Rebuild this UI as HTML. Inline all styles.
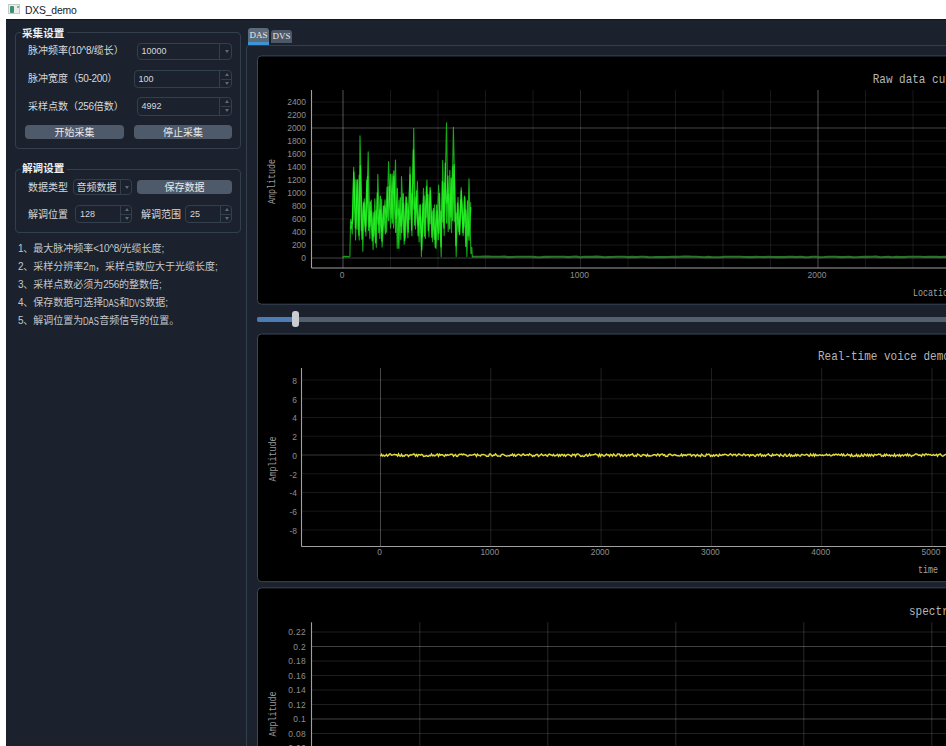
<!DOCTYPE html><html lang="zh"><head><meta charset="utf-8"><title>DXS_demo</title><style>
*{box-sizing:border-box;margin:0;padding:0}
html,body{width:946px;height:746px;overflow:hidden;background:#fff}
body{position:relative;font-family:"Liberation Sans","Noto Sans CJK SC",sans-serif;font-size:10px;color:#d6d9dc}
.abs{position:absolute}
#win{position:absolute;left:6px;top:19px;width:940px;height:727px;background:#1b222d;border-top:1px solid #10161d}
#title{position:absolute;left:25px;top:3px;font-size:10.4px;line-height:15px;color:#1a1a1a;font-family:"Liberation Sans",sans-serif;letter-spacing:-0.2px}
.gb{position:absolute;border:1px solid #343f4d;border-radius:4px}
.gbt{position:absolute;font-weight:bold;font-size:10.6px;line-height:12px;background:#1b222d;padding:0 3px 0 1px;white-space:nowrap;color:#eef0f2}
.lb{position:absolute;font-size:10px;line-height:12px;white-space:nowrap;color:#d6d9dc}
.a{display:inline-block;font-size:10.5px;line-height:12px;transform:scaleX(.74);transform-origin:0 50%;vertical-align:top}
.d{letter-spacing:-0.3px}
.inp{position:absolute;border:1px solid #343f4d;border-radius:4px;background:#1b222d;font-size:9px;line-height:14px;color:#d6d9dc;white-space:nowrap}
.inp span.v{position:absolute;left:4px;top:50%;transform:translateY(-50%)}
.inp .sep{position:absolute;top:0;bottom:0;right:10.5px;width:1px;background:#343f4d}
.inp .mid{position:absolute;right:0;width:10px;top:50%;height:1px;background:#343f4d}
.btn{position:absolute;background:#4e5a69;border-radius:4px;text-align:center;font-size:10px;line-height:14px;color:#e8eaec;white-space:nowrap}
.arr{position:absolute;width:0;height:0;border-left:2.5px solid transparent;border-right:2.5px solid transparent}
.up{border-bottom:3px solid #5f6974}
.dn{border-top:3px solid #5f6974}
.tab{position:absolute;background:#4e5a69;color:#e8eaec;font-size:9px;text-align:center;border-radius:3px 3px 0 0;font-family:"Liberation Serif",serif}
.plot{position:absolute;background:#000;border:1px solid #3b4858;border-radius:4px;overflow:hidden}
svg text{font-family:"Liberation Sans",sans-serif}
svg text.m{font-family:"Liberation Mono",monospace}
</style></head><body>
<div class="abs" style="left:0;top:0;width:946px;height:19px;background:#fff"></div>
<div class="abs" style="left:8px;top:3.5px;width:12px;height:10px;background:#eceeed;border:1px solid #c4cac8"></div>
<div class="abs" style="left:9.5px;top:6px;width:4px;height:6.5px;background:#3f8f78;border-radius:1px"></div>
<div class="abs" style="left:17px;top:6px;width:2px;height:2px;background:#7fb5a0"></div>
<div id="title">DXS_demo</div>
<div id="win">
<div class="gb" style="left:9px;top:12px;width:226px;height:117px"></div>
<div class="gbt" style="left:15px;top:6.5px">采集设置</div>
<div class="lb" style="left:22px;top:25px;">脉冲频率<span class="d">(10^8/</span>缆长）</div>
<div class="inp" style="left:130.5px;top:22.5px;width:95.0px;height:17.0px;font-size:9px"><span class="v" style="left:4px;margin-top:0px">10000</span><div class="sep"></div><div class="arr dn" style="right:2px;top:6.0px"></div></div>
<div class="lb" style="left:22px;top:53px;">脉冲宽度（<span class="d">50-200</span>）</div>
<div class="inp" style="left:127.5px;top:49.5px;width:98.0px;height:18.0px"><span class="v">100</span><div class="sep"></div><div class="mid"></div><div class="arr up" style="right:2px;top:2.0px"></div><div class="arr dn" style="right:2px;top:11.0px"></div></div>
<div class="lb" style="left:22px;top:81px;">采样点数（<span class="d">256</span>倍数）</div>
<div class="inp" style="left:130.5px;top:77px;width:95.0px;height:18.5px"><span class="v">4992</span><div class="sep"></div><div class="mid"></div><div class="arr up" style="right:2px;top:2.125px"></div><div class="arr dn" style="right:2px;top:11.375px"></div></div>
<div class="btn" style="left:19px;top:105px;width:99px;height:14px;line-height:15.6px">开始采集</div>
<div class="btn" style="left:128px;top:105px;width:98px;height:14px;line-height:15.6px">停止采集</div>
<div class="gb" style="left:9px;top:149px;width:226px;height:64px"></div>
<div class="gbt" style="left:15px;top:142px">解调设置</div>
<div class="lb" style="left:22px;top:161.5px;">数据类型</div>
<div class="inp" style="left:67px;top:159px;width:59px;height:16px;font-size:10px"><span class="v" style="left:2.5px;margin-top:0.8px">音频数据</span><div class="sep"></div><div class="arr dn" style="right:2px;top:5.5px"></div></div>
<div class="btn" style="left:131px;top:160px;width:95px;height:14px;line-height:15.6px">保存数据</div>
<div class="lb" style="left:22px;top:188.5px;">解调位置</div>
<div class="inp" style="left:69px;top:185px;width:57px;height:18px"><span class="v">128</span><div class="sep"></div><div class="mid"></div><div class="arr up" style="right:2px;top:2.0px"></div><div class="arr dn" style="right:2px;top:11.0px"></div></div>
<div class="lb" style="left:135px;top:188.5px;">解调范围</div>
<div class="inp" style="left:179px;top:185px;width:47px;height:18px"><span class="v">25</span><div class="sep"></div><div class="mid"></div><div class="arr up" style="right:2px;top:2.0px"></div><div class="arr dn" style="right:2px;top:11.0px"></div></div>
<div class="lb" style="left:12px;top:223px;color:#c3c7cb"><span class="d">1</span>、最大脉冲频率<span class="d">&lt;10^8/</span>光缆长度;</div>
<div class="lb" style="left:12px;top:241px;color:#c3c7cb"><span class="d">2</span>、采样分辨率<span class="d">2</span><span class="a" style="margin-right:-2.3px">m</span>，采样点数应大于光缆长度;</div>
<div class="lb" style="left:12px;top:259px;color:#c3c7cb"><span class="d">3</span>、采样点数必须为<span class="d">256</span>的整数倍;</div>
<div class="lb" style="left:12px;top:277px;color:#c3c7cb"><span class="d">4</span>、保存数据可选择<span class="a" style="margin-right:-5.6px">DAS</span>和<span class="a" style="margin-right:-5.6px">DVS</span>数据;</div>
<div class="lb" style="left:12px;top:295px;color:#c3c7cb"><span class="d">5</span>、解调位置为<span class="a" style="margin-right:-5.6px">DAS</span>音频信号的位置。</div>
<div class="tab" style="left:242px;top:8px;width:21px;height:17px;line-height:14.5px;border-bottom:3.5px solid #3c93d8;background:#5c6a7a">DAS</div>
<div class="tab" style="left:265px;top:9.600000000000001px;width:21px;height:13.2px;line-height:13.5px;background:#4c5767">DVS</div>
<div class="abs" style="left:240px;top:25px;width:720px;height:720px;border:1px solid #343f4d;border-radius:3px"></div>
<div class="abs" style="left:251px;top:296.5px;width:700px;height:5px;background:#535f6b;border-radius:2px"></div>
<div class="abs" style="left:251px;top:296.5px;width:38px;height:5px;background:#4d7bb3;border-radius:2px"></div>
<div class="abs" style="left:286px;top:291px;width:7px;height:16px;background:#c9ccd0;border-radius:3px"></div>
</div>
<svg width="946" height="746" viewBox="0 0 946 746" style="position:absolute;left:0;top:0"><rect x="257.5" y="55.9" width="702" height="248.29999999999998" rx="4" fill="#000" stroke="#3b4858" stroke-width="1"/><line x1="311.5" x2="960" y1="258" y2="258" stroke="#fff" stroke-opacity="0.27" stroke-width="1"/><line x1="311.5" x2="960" y1="245" y2="245" stroke="#fff" stroke-opacity="0.085" stroke-width="1"/><line x1="311.5" x2="960" y1="232" y2="232" stroke="#fff" stroke-opacity="0.085" stroke-width="1"/><line x1="311.5" x2="960" y1="219" y2="219" stroke="#fff" stroke-opacity="0.085" stroke-width="1"/><line x1="311.5" x2="960" y1="206" y2="206" stroke="#fff" stroke-opacity="0.085" stroke-width="1"/><line x1="311.5" x2="960" y1="193" y2="193" stroke="#fff" stroke-opacity="0.12" stroke-width="1"/><line x1="311.5" x2="960" y1="180" y2="180" stroke="#fff" stroke-opacity="0.085" stroke-width="1"/><line x1="311.5" x2="960" y1="167" y2="167" stroke="#fff" stroke-opacity="0.085" stroke-width="1"/><line x1="311.5" x2="960" y1="154" y2="154" stroke="#fff" stroke-opacity="0.085" stroke-width="1"/><line x1="311.5" x2="960" y1="141" y2="141" stroke="#fff" stroke-opacity="0.085" stroke-width="1"/><line x1="311.5" x2="960" y1="128" y2="128" stroke="#fff" stroke-opacity="0.27" stroke-width="1"/><line x1="311.5" x2="960" y1="115" y2="115" stroke="#fff" stroke-opacity="0.085" stroke-width="1"/><line x1="311.5" x2="960" y1="102" y2="102" stroke="#fff" stroke-opacity="0.085" stroke-width="1"/><line x1="343.0" x2="343.0" y1="90" y2="268" stroke="#fff" stroke-opacity="0.32" stroke-width="1"/><line x1="390.5" x2="390.5" y1="90" y2="268" stroke="#fff" stroke-opacity="0.09" stroke-width="1"/><line x1="438.0" x2="438.0" y1="90" y2="268" stroke="#fff" stroke-opacity="0.09" stroke-width="1"/><line x1="485.5" x2="485.5" y1="90" y2="268" stroke="#fff" stroke-opacity="0.09" stroke-width="1"/><line x1="533.0" x2="533.0" y1="90" y2="268" stroke="#fff" stroke-opacity="0.09" stroke-width="1"/><line x1="580.5" x2="580.5" y1="90" y2="268" stroke="#fff" stroke-opacity="0.14" stroke-width="1"/><line x1="628.0" x2="628.0" y1="90" y2="268" stroke="#fff" stroke-opacity="0.09" stroke-width="1"/><line x1="675.5" x2="675.5" y1="90" y2="268" stroke="#fff" stroke-opacity="0.09" stroke-width="1"/><line x1="723.0" x2="723.0" y1="90" y2="268" stroke="#fff" stroke-opacity="0.09" stroke-width="1"/><line x1="770.5" x2="770.5" y1="90" y2="268" stroke="#fff" stroke-opacity="0.09" stroke-width="1"/><line x1="818.0" x2="818.0" y1="90" y2="268" stroke="#fff" stroke-opacity="0.32" stroke-width="1"/><line x1="865.5" x2="865.5" y1="90" y2="268" stroke="#fff" stroke-opacity="0.09" stroke-width="1"/><line x1="913.0" x2="913.0" y1="90" y2="268" stroke="#fff" stroke-opacity="0.09" stroke-width="1"/><line x1="960.5" x2="960.5" y1="90" y2="268" stroke="#fff" stroke-opacity="0.09" stroke-width="1"/><line x1="311.5" x2="311.5" y1="90" y2="268" stroke="#a0a0a0" stroke-width="1.1"/><line x1="311.5" x2="960" y1="268" y2="268" stroke="#a0a0a0" stroke-width="1.1"/><text font-size="9.6" fill="#8e8e8e" text-anchor="end" letter-spacing="0" transform="translate(306.0 261.4) scale(0.88 1)">0</text><text font-size="9.6" fill="#8e8e8e" text-anchor="end" letter-spacing="0" transform="translate(306.0 248.4) scale(0.88 1)">200</text><text font-size="9.6" fill="#8e8e8e" text-anchor="end" letter-spacing="0" transform="translate(306.0 235.4) scale(0.88 1)">400</text><text font-size="9.6" fill="#8e8e8e" text-anchor="end" letter-spacing="0" transform="translate(306.0 222.4) scale(0.88 1)">600</text><text font-size="9.6" fill="#8e8e8e" text-anchor="end" letter-spacing="0" transform="translate(306.0 209.4) scale(0.88 1)">800</text><text font-size="9.6" fill="#8e8e8e" text-anchor="end" letter-spacing="0" transform="translate(306.0 196.4) scale(0.88 1)">1000</text><text font-size="9.6" fill="#8e8e8e" text-anchor="end" letter-spacing="0" transform="translate(306.0 183.4) scale(0.88 1)">1200</text><text font-size="9.6" fill="#8e8e8e" text-anchor="end" letter-spacing="0" transform="translate(306.0 170.4) scale(0.88 1)">1400</text><text font-size="9.6" fill="#8e8e8e" text-anchor="end" letter-spacing="0" transform="translate(306.0 157.4) scale(0.88 1)">1600</text><text font-size="9.6" fill="#8e8e8e" text-anchor="end" letter-spacing="0" transform="translate(306.0 144.4) scale(0.88 1)">1800</text><text font-size="9.6" fill="#8e8e8e" text-anchor="end" letter-spacing="0" transform="translate(306.0 131.4) scale(0.88 1)">2000</text><text font-size="9.6" fill="#8e8e8e" text-anchor="end" letter-spacing="0" transform="translate(306.0 118.4) scale(0.88 1)">2200</text><text font-size="9.6" fill="#8e8e8e" text-anchor="end" letter-spacing="0" transform="translate(306.0 105.4) scale(0.88 1)">2400</text><text font-size="9.6" fill="#8e8e8e" text-anchor="middle" letter-spacing="0" transform="translate(342.0 278.4) scale(0.88 1)">0</text><text font-size="9.6" fill="#8e8e8e" text-anchor="middle" letter-spacing="0" transform="translate(579.5 278.4) scale(0.88 1)">1000</text><text font-size="9.6" fill="#8e8e8e" text-anchor="middle" letter-spacing="0" transform="translate(817.0 278.4) scale(0.88 1)">2000</text><text class="m" font-size="10" fill="#9a9a9a" text-anchor="middle" transform="translate(275 181.5) rotate(-90) scale(0.833 1)">Amplitude</text><text class="m" font-size="13" fill="#b6b6b6" transform="translate(872.7 83.2) scale(0.846 1)">Raw data curve</text><text class="m" font-size="10" fill="#a4a4a4" transform="translate(913 295.8) scale(0.833 1)">Location</text><polyline points="472.3,256.7 476.3,256.7 480.3,256.8 484.3,256.6 488.3,256.6 492.3,256.7 496.3,256.7 500.3,256.8 504.3,256.6 508.3,257.1 512.3,257.0 516.3,256.7 520.3,256.8 524.3,256.8 528.3,256.8 532.3,256.7 536.3,257.1 540.3,257.2 544.3,256.9 548.3,256.9 552.3,256.7 556.3,256.7 560.3,256.8 564.3,256.8 568.3,257.1 572.3,256.7 576.3,256.6 580.3,257.2 584.3,256.9 588.3,256.7 592.3,256.9 596.3,256.6 600.3,256.9 604.3,257.2 608.3,257.1 612.3,257.0 616.3,256.8 620.3,256.8 624.3,256.7 628.3,257.1 632.3,256.9 636.3,257.1 640.3,256.8 644.3,256.7 648.3,257.1 652.3,257.2 656.3,257.1 660.3,257.1 664.3,257.1 668.3,257.0 672.3,256.7 676.3,256.9 680.3,256.8 684.3,256.6 688.3,256.6 692.3,256.8 696.3,256.8 700.3,257.0 704.3,257.2 708.3,256.9 712.3,257.2 716.3,257.2 720.3,257.2 724.3,256.8 728.3,256.7 732.3,256.7 736.3,256.7 740.3,256.7 744.3,257.0 748.3,257.1 752.3,257.1 756.3,256.9 760.3,257.0 764.3,257.1 768.3,256.7 772.3,257.0 776.3,257.1 780.3,257.1 784.3,257.1 788.3,256.9 792.3,256.7 796.3,257.1 800.3,256.8 804.3,257.1 808.3,257.2 812.3,256.8 816.3,256.8 820.3,257.2 824.3,257.0 828.3,256.7 832.3,256.7 836.3,256.7 840.3,257.1 844.3,257.1 848.3,256.7 852.3,257.1 856.3,257.2 860.3,257.0 864.3,256.8 868.3,256.9 872.3,256.7 876.3,256.6 880.3,257.2 884.3,257.0 888.3,256.9 892.3,257.2 896.3,256.9 900.3,257.1 904.3,257.1 908.3,256.7 912.3,256.8 916.3,256.8 920.3,256.7 924.3,257.0 928.3,256.8 932.3,256.9 936.3,256.7 940.3,257.1 944.3,256.8 948.3,256.9 952.3,257.0 956.3,257.1 960.3,256.9 964.3,257.2" fill="none" stroke="#297629" stroke-width="2.1"/><polyline points="342.4,256.7 343.5,257.0 344.6,256.1 345.7,257.1 346.7,256.3 347.8,256.6 348.9,257.1 349.9,256.3 350.6,219.6 352.3,233.9 353.7,167.2 355.6,239.9 357.2,179.4 359.2,240.0 360.0,135.8 362.8,251.2 364.3,198.8 365.9,236.0 368.2,151.8 369.8,238.6 371.3,200.0 373.1,249.6 374.8,198.9 376.3,247.3 377.8,174.4 379.8,238.6 381.6,199.4 382.1,246.9 385.0,199.7 386.6,232.2 388.6,161.5 390.5,227.9 392.1,173.8 393.6,228.1 395.5,160.1 397.2,248.3 399.0,200.4 400.8,239.8 401.5,176.5 404.2,244.2 406.0,196.5 407.9,237.8 410.0,166.9 411.9,235.7 413.7,128.2 415.5,229.1 417.4,181.4 419.1,241.9 420.5,204.8 421.4,256.4 423.5,188.2 425.4,238.4 426.9,180.0 428.9,236.9 430.5,190.4 432.5,241.8 434.5,204.7 436.1,248.6 438.6,185.1 441.2,256.4 442.7,160.4 444.2,235.5 446.5,122.9 448.2,231.4 449.8,170.4 451.5,232.6 453.4,127.2 456.2,256.4 458.0,197.3 459.8,235.0 461.2,187.6 463.1,235.6 465.0,197.9 466.9,256.4 469.0,178.7 470.9,253.6 471.8,247.3 472.3,257.2" fill="none" stroke="#1fe01f" stroke-width="1.1" stroke-linejoin="round" stroke-opacity="0.75"/><polyline points="350.6,222.4 352.2,223.3 353.8,172.1 355.5,227.9 357.2,180.3 358.9,235.3 360.4,165.6 362.0,239.2 363.7,203.4 365.3,231.3 366.9,180.2 368.7,230.4 370.3,201.8 372.2,240.7 374.0,212.5 375.5,242.8 377.4,192.9 378.8,232.8 380.3,196.2 381.8,241.0 383.5,206.1 385.4,233.7 387.1,187.1 388.5,220.7 390.4,174.3 392.3,223.0 393.9,170.8 395.7,232.4 397.3,188.5 398.8,248.3 400.3,198.0 401.6,232.6 403.2,193.6 404.7,240.6 406.3,197.4 408.2,232.1 410.1,174.6 411.6,230.2 413.4,149.9 414.7,225.2 416.6,190.8 418.1,235.8 419.9,204.9 421.7,249.8 423.0,204.0 424.6,236.2 426.5,186.6 428.3,230.7 430.1,187.6 431.9,237.3 433.5,208.6 435.3,247.3 436.7,204.9 438.2,239.6 439.5,193.3 441.0,246.8 442.4,181.5 443.9,228.0 445.3,163.2 446.6,222.9 447.9,176.0 449.6,228.8 451.2,178.1 452.5,220.5 454.1,164.6 455.9,245.7 457.5,203.1 459.4,234.1 461.3,191.0 463.0,232.8 464.5,196.2 465.8,246.5 467.6,201.0 469.0,240.2 470.8,207.0" fill="none" stroke="#22ff22" stroke-width="1.3" stroke-linejoin="round" stroke-opacity="0.75"/><polyline points="350.6,229.0 352.8,218.7 355.3,179.9 357.3,228.9 359.4,175.5 361.5,230.3 363.7,202.4 365.6,225.9 367.7,176.8 369.4,226.4 371.3,211.8 373.5,236.1 375.8,210.9 378.3,223.9 380.3,209.9 382.1,231.2 384.4,206.2 386.8,217.0 389.1,186.9 391.5,217.6 393.6,176.4 396.1,218.0 398.5,209.1 401.0,225.7 403.3,203.6 405.0,237.5 407.1,203.6 409.5,219.0 411.8,193.6 414.1,209.1 415.8,197.5 418.1,225.1 420.3,216.3 422.1,236.7 424.0,196.2 426.0,217.3 427.9,194.8 430.4,223.3 432.5,211.4 434.8,239.1 437.0,211.3 438.8,233.1 440.7,211.5 442.7,221.8 444.4,183.2 446.4,203.0 448.7,194.2 450.7,216.7 452.8,166.8 454.6,221.0 456.5,213.5 459.0,231.3 461.1,200.1 463.7,227.0 465.6,210.1 468.1,235.3 470.4,202.3" fill="none" stroke="#2aff2a" stroke-width="1.9" stroke-linejoin="round" stroke-opacity="0.5"/><rect x="257.5" y="334.0" width="702" height="247.70000000000005" rx="4" fill="#000" stroke="#3b4858" stroke-width="1"/><line x1="301.5" x2="960" y1="530.0" y2="530.0" stroke="#fff" stroke-opacity="0.09" stroke-width="1"/><line x1="301.5" x2="960" y1="511.2" y2="511.2" stroke="#fff" stroke-opacity="0.09" stroke-width="1"/><line x1="301.5" x2="960" y1="492.5" y2="492.5" stroke="#fff" stroke-opacity="0.09" stroke-width="1"/><line x1="301.5" x2="960" y1="473.8" y2="473.8" stroke="#fff" stroke-opacity="0.09" stroke-width="1"/><line x1="301.5" x2="960" y1="455.0" y2="455.0" stroke="#fff" stroke-opacity="0.22" stroke-width="1"/><line x1="301.5" x2="960" y1="436.2" y2="436.2" stroke="#fff" stroke-opacity="0.09" stroke-width="1"/><line x1="301.5" x2="960" y1="417.5" y2="417.5" stroke="#fff" stroke-opacity="0.09" stroke-width="1"/><line x1="301.5" x2="960" y1="398.8" y2="398.8" stroke="#fff" stroke-opacity="0.09" stroke-width="1"/><line x1="301.5" x2="960" y1="380.0" y2="380.0" stroke="#fff" stroke-opacity="0.09" stroke-width="1"/><line x1="380.5" x2="380.5" y1="368" y2="546.5" stroke="#fff" stroke-opacity="0.28" stroke-width="1"/><line x1="490.8" x2="490.8" y1="368" y2="546.5" stroke="#fff" stroke-opacity="0.13" stroke-width="1"/><line x1="601.1" x2="601.1" y1="368" y2="546.5" stroke="#fff" stroke-opacity="0.13" stroke-width="1"/><line x1="711.4" x2="711.4" y1="368" y2="546.5" stroke="#fff" stroke-opacity="0.13" stroke-width="1"/><line x1="821.7" x2="821.7" y1="368" y2="546.5" stroke="#fff" stroke-opacity="0.13" stroke-width="1"/><line x1="932.0" x2="932.0" y1="368" y2="546.5" stroke="#fff" stroke-opacity="0.13" stroke-width="1"/><line x1="1042.3" x2="1042.3" y1="368" y2="546.5" stroke="#fff" stroke-opacity="0.13" stroke-width="1"/><line x1="301.5" x2="301.5" y1="368" y2="546.5" stroke="#a0a0a0" stroke-width="1.1"/><line x1="301.5" x2="960" y1="546.5" y2="546.5" stroke="#a0a0a0" stroke-width="1.1"/><text font-size="9.6" fill="#8e8e8e" text-anchor="end" letter-spacing="0" transform="translate(297.0 533.9) scale(0.88 1)">-8</text><text font-size="9.6" fill="#8e8e8e" text-anchor="end" letter-spacing="0" transform="translate(297.0 515.1) scale(0.88 1)">-6</text><text font-size="9.6" fill="#8e8e8e" text-anchor="end" letter-spacing="0" transform="translate(297.0 496.4) scale(0.88 1)">-4</text><text font-size="9.6" fill="#8e8e8e" text-anchor="end" letter-spacing="0" transform="translate(297.0 477.6) scale(0.88 1)">-2</text><text font-size="9.6" fill="#8e8e8e" text-anchor="end" letter-spacing="0" transform="translate(297.0 458.9) scale(0.88 1)">0</text><text font-size="9.6" fill="#8e8e8e" text-anchor="end" letter-spacing="0" transform="translate(297.0 440.1) scale(0.88 1)">2</text><text font-size="9.6" fill="#8e8e8e" text-anchor="end" letter-spacing="0" transform="translate(297.0 421.4) scale(0.88 1)">4</text><text font-size="9.6" fill="#8e8e8e" text-anchor="end" letter-spacing="0" transform="translate(297.0 402.6) scale(0.88 1)">6</text><text font-size="9.6" fill="#8e8e8e" text-anchor="end" letter-spacing="0" transform="translate(297.0 383.9) scale(0.88 1)">8</text><text font-size="9.6" fill="#8e8e8e" text-anchor="middle" letter-spacing="0" transform="translate(379.5 555.2) scale(0.88 1)">0</text><text font-size="9.6" fill="#8e8e8e" text-anchor="middle" letter-spacing="0" transform="translate(489.8 555.2) scale(0.88 1)">1000</text><text font-size="9.6" fill="#8e8e8e" text-anchor="middle" letter-spacing="0" transform="translate(600.1 555.2) scale(0.88 1)">2000</text><text font-size="9.6" fill="#8e8e8e" text-anchor="middle" letter-spacing="0" transform="translate(710.4 555.2) scale(0.88 1)">3000</text><text font-size="9.6" fill="#8e8e8e" text-anchor="middle" letter-spacing="0" transform="translate(820.7 555.2) scale(0.88 1)">4000</text><text font-size="9.6" fill="#8e8e8e" text-anchor="middle" letter-spacing="0" transform="translate(931.0 555.2) scale(0.88 1)">5000</text><text class="m" font-size="10" fill="#9a9a9a" text-anchor="middle" transform="translate(276 459) rotate(-90) scale(0.833 1)">Amplitude</text><text class="m" font-size="13" fill="#b6b6b6" transform="translate(818 359.8) scale(0.846 1)">Real-time voice demodulation</text><text class="m" font-size="10" fill="#a4a4a4" transform="translate(918 573.3) scale(0.833 1)">time</text><polyline points="380.5,456.4 381.5,454.2 382.5,456.0 383.5,455.2 384.5,456.2 385.5,455.7 386.5,454.5 387.5,456.2 388.5,455.2 389.5,454.0 390.5,453.9 391.5,455.2 392.5,455.1 393.5,454.7 394.5,454.3 395.5,454.8 396.5,454.7 397.5,456.1 398.5,453.9 399.5,455.9 400.5,456.1 401.5,454.2 402.5,456.3 403.5,455.8 404.5,456.2 405.5,454.7 406.5,454.9 407.5,454.9 408.5,456.5 409.5,455.4 410.5,454.8 411.5,455.0 412.5,454.6 413.5,454.0 414.5,454.2 415.5,456.1 416.5,454.6 417.5,456.3 418.5,454.5 419.5,454.6 420.5,455.2 421.5,454.4 422.5,454.9 423.5,456.4 424.5,456.2 425.5,456.0 426.5,455.5 427.5,456.3 428.5,456.3 429.5,455.3 430.5,455.8 431.5,454.0 432.5,455.8 433.5,455.1 434.5,455.9 435.5,455.6 436.5,454.6 437.5,454.0 438.5,456.3 439.5,454.2 440.5,455.1 441.5,454.8 442.5,454.7 443.5,455.8 444.5,456.4 445.5,454.6 446.5,455.6 447.5,454.7 448.5,455.3 449.5,454.9 450.5,454.3 451.5,454.3 452.5,454.4 453.5,456.3 454.5,455.2 455.5,454.5 456.5,456.3 457.5,456.5 458.5,455.1 459.5,454.3 460.5,454.4 461.5,454.1 462.5,454.8 463.5,454.1 464.5,454.5 465.5,454.6 466.5,455.4 467.5,456.2 468.5,455.8 469.5,455.0 470.5,455.0 471.5,455.3 472.5,454.9 473.5,454.8 474.5,454.1 475.5,454.6 476.5,456.4 477.5,454.2 478.5,455.2 479.5,455.5 480.5,456.1 481.5,454.5 482.5,454.6 483.5,454.5 484.5,454.9 485.5,455.1 486.5,456.4 487.5,456.1 488.5,456.2 489.5,454.0 490.5,454.0 491.5,455.7 492.5,456.2 493.5,455.1 494.5,455.4 495.5,453.9 496.5,454.9 497.5,456.3 498.5,456.0 499.5,456.1 500.5,456.4 501.5,454.5 502.5,454.2 503.5,454.3 504.5,455.3 505.5,455.7 506.5,456.3 507.5,455.8 508.5,455.6 509.5,455.9 510.5,455.1 511.5,455.3 512.5,454.0 513.5,455.9 514.5,454.5 515.5,456.3 516.5,455.6 517.5,454.7 518.5,454.2 519.5,454.6 520.5,455.6 521.5,455.7 522.5,454.2 523.5,454.1 524.5,455.3 525.5,455.4 526.5,454.9 527.5,454.5 528.5,455.5 529.5,453.9 530.5,454.7 531.5,455.1 532.5,456.4 533.5,455.6 534.5,456.2 535.5,455.1 536.5,454.5 537.5,454.5 538.5,456.4 539.5,455.7 540.5,454.7 541.5,454.0 542.5,455.2 543.5,455.7 544.5,455.0 545.5,454.6 546.5,455.6 547.5,456.3 548.5,454.5 549.5,454.0 550.5,454.8 551.5,455.0 552.5,455.7 553.5,454.4 554.5,456.0 555.5,455.8 556.5,455.2 557.5,454.4 558.5,456.4 559.5,454.7 560.5,456.0 561.5,454.5 562.5,454.5 563.5,455.9 564.5,454.7 565.5,456.4 566.5,455.2 567.5,454.4 568.5,454.5 569.5,455.0 570.5,455.6 571.5,456.4 572.5,454.3 573.5,454.9 574.5,454.5 575.5,456.4 576.5,454.3 577.5,454.0 578.5,454.1 579.5,454.9 580.5,456.2 581.5,456.2 582.5,455.8 583.5,456.5 584.5,456.3 585.5,454.8 586.5,454.4 587.5,456.3 588.5,455.8 589.5,454.0 590.5,455.6 591.5,454.9 592.5,454.9 593.5,454.8 594.5,454.3 595.5,453.9 596.5,454.6 597.5,454.8 598.5,456.4 599.5,454.2 600.5,456.4 601.5,454.4 602.5,454.8 603.5,456.0 604.5,456.0 605.5,455.0 606.5,454.0 607.5,455.1 608.5,454.9 609.5,456.3 610.5,454.4 611.5,454.8 612.5,456.2 613.5,454.0 614.5,455.0 615.5,456.0 616.5,455.9 617.5,454.0 618.5,454.0 619.5,454.1 620.5,456.3 621.5,454.6 622.5,455.8 623.5,456.2 624.5,454.8 625.5,454.6 626.5,456.4 627.5,455.5 628.5,454.6 629.5,455.8 630.5,454.7 631.5,454.6 632.5,453.9 633.5,455.9 634.5,456.3 635.5,455.5 636.5,456.4 637.5,454.0 638.5,454.5 639.5,455.1 640.5,456.4 641.5,456.4 642.5,454.9 643.5,454.6 644.5,455.0 645.5,455.2 646.5,456.3 647.5,454.4 648.5,456.0 649.5,455.8 650.5,456.0 651.5,455.9 652.5,455.5 653.5,454.8 654.5,454.7 655.5,454.8 656.5,455.9 657.5,454.1 658.5,454.4 659.5,455.9 660.5,454.5 661.5,454.1 662.5,454.0 663.5,455.3 664.5,454.7 665.5,456.4 666.5,456.2 667.5,456.5 668.5,454.6 669.5,454.1 670.5,454.2 671.5,455.2 672.5,455.7 673.5,455.1 674.5,454.5 675.5,455.0 676.5,455.5 677.5,455.7 678.5,455.8 679.5,456.1 680.5,455.6 681.5,454.2 682.5,456.1 683.5,454.7 684.5,455.4 685.5,454.9 686.5,455.8 687.5,454.4 688.5,454.5 689.5,454.5 690.5,454.3 691.5,456.2 692.5,455.4 693.5,454.7 694.5,454.9 695.5,456.5 696.5,455.2 697.5,454.5 698.5,456.0 699.5,455.6 700.5,456.5 701.5,454.2 702.5,455.1 703.5,456.0 704.5,456.1 705.5,456.3 706.5,454.0 707.5,454.7 708.5,454.2 709.5,454.4 710.5,456.4 711.5,455.4 712.5,456.3 713.5,454.9 714.5,456.2 715.5,455.1 716.5,454.6 717.5,455.9 718.5,456.4 719.5,454.2 720.5,455.4 721.5,455.5 722.5,454.5 723.5,454.9 724.5,454.3 725.5,454.4 726.5,454.6 727.5,455.5 728.5,455.6 729.5,454.4 730.5,453.9 731.5,454.8 732.5,455.7 733.5,454.4 734.5,454.7 735.5,454.4 736.5,456.0 737.5,455.3 738.5,454.1 739.5,454.2 740.5,454.9 741.5,455.3 742.5,455.6 743.5,454.1 744.5,454.3 745.5,455.7 746.5,455.0 747.5,454.6 748.5,454.7 749.5,456.4 750.5,454.7 751.5,455.4 752.5,454.8 753.5,455.0 754.5,456.1 755.5,456.5 756.5,454.8 757.5,454.4 758.5,455.8 759.5,454.4 760.5,453.9 761.5,456.2 762.5,455.0 763.5,456.0 764.5,455.0 765.5,456.2 766.5,455.1 767.5,454.3 768.5,453.9 769.5,455.3 770.5,455.6 771.5,456.3 772.5,454.1 773.5,455.5 774.5,454.9 775.5,455.2 776.5,454.3 777.5,454.6 778.5,455.3 779.5,456.3 780.5,454.2 781.5,455.2 782.5,456.0 783.5,456.4 784.5,454.4 785.5,454.2 786.5,456.4 787.5,456.4 788.5,455.2 789.5,454.0 790.5,456.3 791.5,454.9 792.5,456.3 793.5,455.5 794.5,456.0 795.5,454.3 796.5,455.9 797.5,454.5 798.5,455.0 799.5,456.1 800.5,456.1 801.5,454.4 802.5,454.5 803.5,454.9 804.5,455.2 805.5,454.9 806.5,454.2 807.5,454.5 808.5,455.8 809.5,456.2 810.5,454.0 811.5,455.4 812.5,455.9 813.5,454.0 814.5,456.1 815.5,454.2 816.5,455.5 817.5,455.3 818.5,455.5 819.5,454.7 820.5,455.0 821.5,455.4 822.5,455.0 823.5,455.6 824.5,455.1 825.5,455.0 826.5,454.0 827.5,455.5 828.5,455.2 829.5,454.5 830.5,455.9 831.5,455.9 832.5,455.1 833.5,454.4 834.5,455.1 835.5,454.2 836.5,454.2 837.5,455.0 838.5,454.1 839.5,455.0 840.5,455.2 841.5,454.0 842.5,455.6 843.5,454.1 844.5,455.8 845.5,455.9 846.5,455.2 847.5,454.0 848.5,455.2 849.5,454.9 850.5,456.4 851.5,454.3 852.5,456.1 853.5,456.5 854.5,455.8 855.5,456.0 856.5,454.4 857.5,456.5 858.5,455.2 859.5,456.4 860.5,456.3 861.5,454.3 862.5,455.9 863.5,456.3 864.5,454.1 865.5,454.8 866.5,455.9 867.5,454.3 868.5,456.2 869.5,454.6 870.5,456.0 871.5,454.3 872.5,455.2 873.5,456.3 874.5,454.4 875.5,454.6 876.5,455.2 877.5,454.7 878.5,454.0 879.5,454.4 880.5,454.3 881.5,456.3 882.5,455.7 883.5,456.2 884.5,454.3 885.5,455.9 886.5,454.2 887.5,455.3 888.5,455.6 889.5,454.8 890.5,456.2 891.5,455.3 892.5,455.4 893.5,456.2 894.5,454.2 895.5,456.5 896.5,455.5 897.5,454.9 898.5,456.0 899.5,454.6 900.5,456.5 901.5,455.4 902.5,454.8 903.5,455.9 904.5,455.0 905.5,454.4 906.5,455.8 907.5,454.0 908.5,456.0 909.5,454.6 910.5,455.6 911.5,456.5 912.5,455.4 913.5,455.6 914.5,454.7 915.5,453.9 916.5,454.0 917.5,454.3 918.5,455.5 919.5,455.0 920.5,455.2 921.5,456.2 922.5,454.2 923.5,454.5 924.5,455.6 925.5,454.0 926.5,453.9 927.5,454.8 928.5,454.2 929.5,454.8 930.5,454.5 931.5,455.4 932.5,455.4 933.5,454.4 934.5,455.5 935.5,455.1 936.5,454.3 937.5,456.3 938.5,454.5 939.5,454.3 940.5,454.1 941.5,455.6 942.5,456.2 943.5,455.9 944.5,454.9 945.5,454.6 946.5,453.9 947.5,455.6 948.5,455.4 949.5,454.8 950.5,455.6 951.5,455.1 952.5,456.3 953.5,455.8 954.5,454.5 955.5,456.2 956.5,454.0 957.5,455.3 958.5,455.0 959.5,454.5" fill="none" stroke="#e0da3a" stroke-width="1.4"/><rect x="257.5" y="587.8" width="702" height="191.70000000000005" rx="4" fill="#000" stroke="#3b4858" stroke-width="1"/><line x1="311.5" x2="960" y1="632.0" y2="632.0" stroke="#fff" stroke-opacity="0.12" stroke-width="1"/><text font-size="9.6" fill="#8e8e8e" text-anchor="end" letter-spacing="0.4" transform="translate(306.0 635.0) scale(0.88 1)">0.22</text><line x1="311.5" x2="960" y1="646.5" y2="646.5" stroke="#fff" stroke-opacity="0.26" stroke-width="1"/><text font-size="9.6" fill="#8e8e8e" text-anchor="end" letter-spacing="0.4" transform="translate(306.0 649.5) scale(0.88 1)">0.2</text><line x1="311.5" x2="960" y1="661.0" y2="661.0" stroke="#fff" stroke-opacity="0.12" stroke-width="1"/><text font-size="9.6" fill="#8e8e8e" text-anchor="end" letter-spacing="0.4" transform="translate(306.0 664.0) scale(0.88 1)">0.18</text><line x1="311.5" x2="960" y1="675.5" y2="675.5" stroke="#fff" stroke-opacity="0.12" stroke-width="1"/><text font-size="9.6" fill="#8e8e8e" text-anchor="end" letter-spacing="0.4" transform="translate(306.0 678.5) scale(0.88 1)">0.16</text><line x1="311.5" x2="960" y1="690.0" y2="690.0" stroke="#fff" stroke-opacity="0.12" stroke-width="1"/><text font-size="9.6" fill="#8e8e8e" text-anchor="end" letter-spacing="0.4" transform="translate(306.0 693.0) scale(0.88 1)">0.14</text><line x1="311.5" x2="960" y1="704.5" y2="704.5" stroke="#fff" stroke-opacity="0.12" stroke-width="1"/><text font-size="9.6" fill="#8e8e8e" text-anchor="end" letter-spacing="0.4" transform="translate(306.0 707.5) scale(0.88 1)">0.12</text><line x1="311.5" x2="960" y1="719.0" y2="719.0" stroke="#fff" stroke-opacity="0.26" stroke-width="1"/><text font-size="9.6" fill="#8e8e8e" text-anchor="end" letter-spacing="0.4" transform="translate(306.0 722.0) scale(0.88 1)">0.1</text><line x1="311.5" x2="960" y1="733.5" y2="733.5" stroke="#fff" stroke-opacity="0.12" stroke-width="1"/><text font-size="9.6" fill="#8e8e8e" text-anchor="end" letter-spacing="0.4" transform="translate(306.0 736.5) scale(0.88 1)">0.08</text><line x1="311.5" x2="960" y1="748.0" y2="748.0" stroke="#fff" stroke-opacity="0.12" stroke-width="1"/><text font-size="9.6" fill="#8e8e8e" text-anchor="end" letter-spacing="0.4" transform="translate(306.0 751.0) scale(0.88 1)">0.06</text><line x1="311.5" x2="960" y1="762.5" y2="762.5" stroke="#fff" stroke-opacity="0.12" stroke-width="1"/><text font-size="9.6" fill="#8e8e8e" text-anchor="end" letter-spacing="0.4" transform="translate(306.0 765.5) scale(0.88 1)">0.04</text><line x1="419.8" x2="419.8" y1="622.3" y2="760" stroke="#fff" stroke-opacity="0.16" stroke-width="1"/><line x1="547.8" x2="547.8" y1="622.3" y2="760" stroke="#fff" stroke-opacity="0.16" stroke-width="1"/><line x1="675.8" x2="675.8" y1="622.3" y2="760" stroke="#fff" stroke-opacity="0.16" stroke-width="1"/><line x1="803.8" x2="803.8" y1="622.3" y2="760" stroke="#fff" stroke-opacity="0.16" stroke-width="1"/><line x1="931.8" x2="931.8" y1="622.3" y2="760" stroke="#fff" stroke-opacity="0.16" stroke-width="1"/><line x1="311.5" x2="311.5" y1="622.3" y2="760" stroke="#a0a0a0" stroke-width="1.1"/><text class="m" font-size="10" fill="#9a9a9a" text-anchor="middle" transform="translate(276 714) rotate(-90) scale(0.833 1)">Amplitude</text><text class="m" font-size="13" fill="#b6b6b6" transform="translate(909 614.8) scale(0.846 1)">spectrum</text></svg>
</body></html>
